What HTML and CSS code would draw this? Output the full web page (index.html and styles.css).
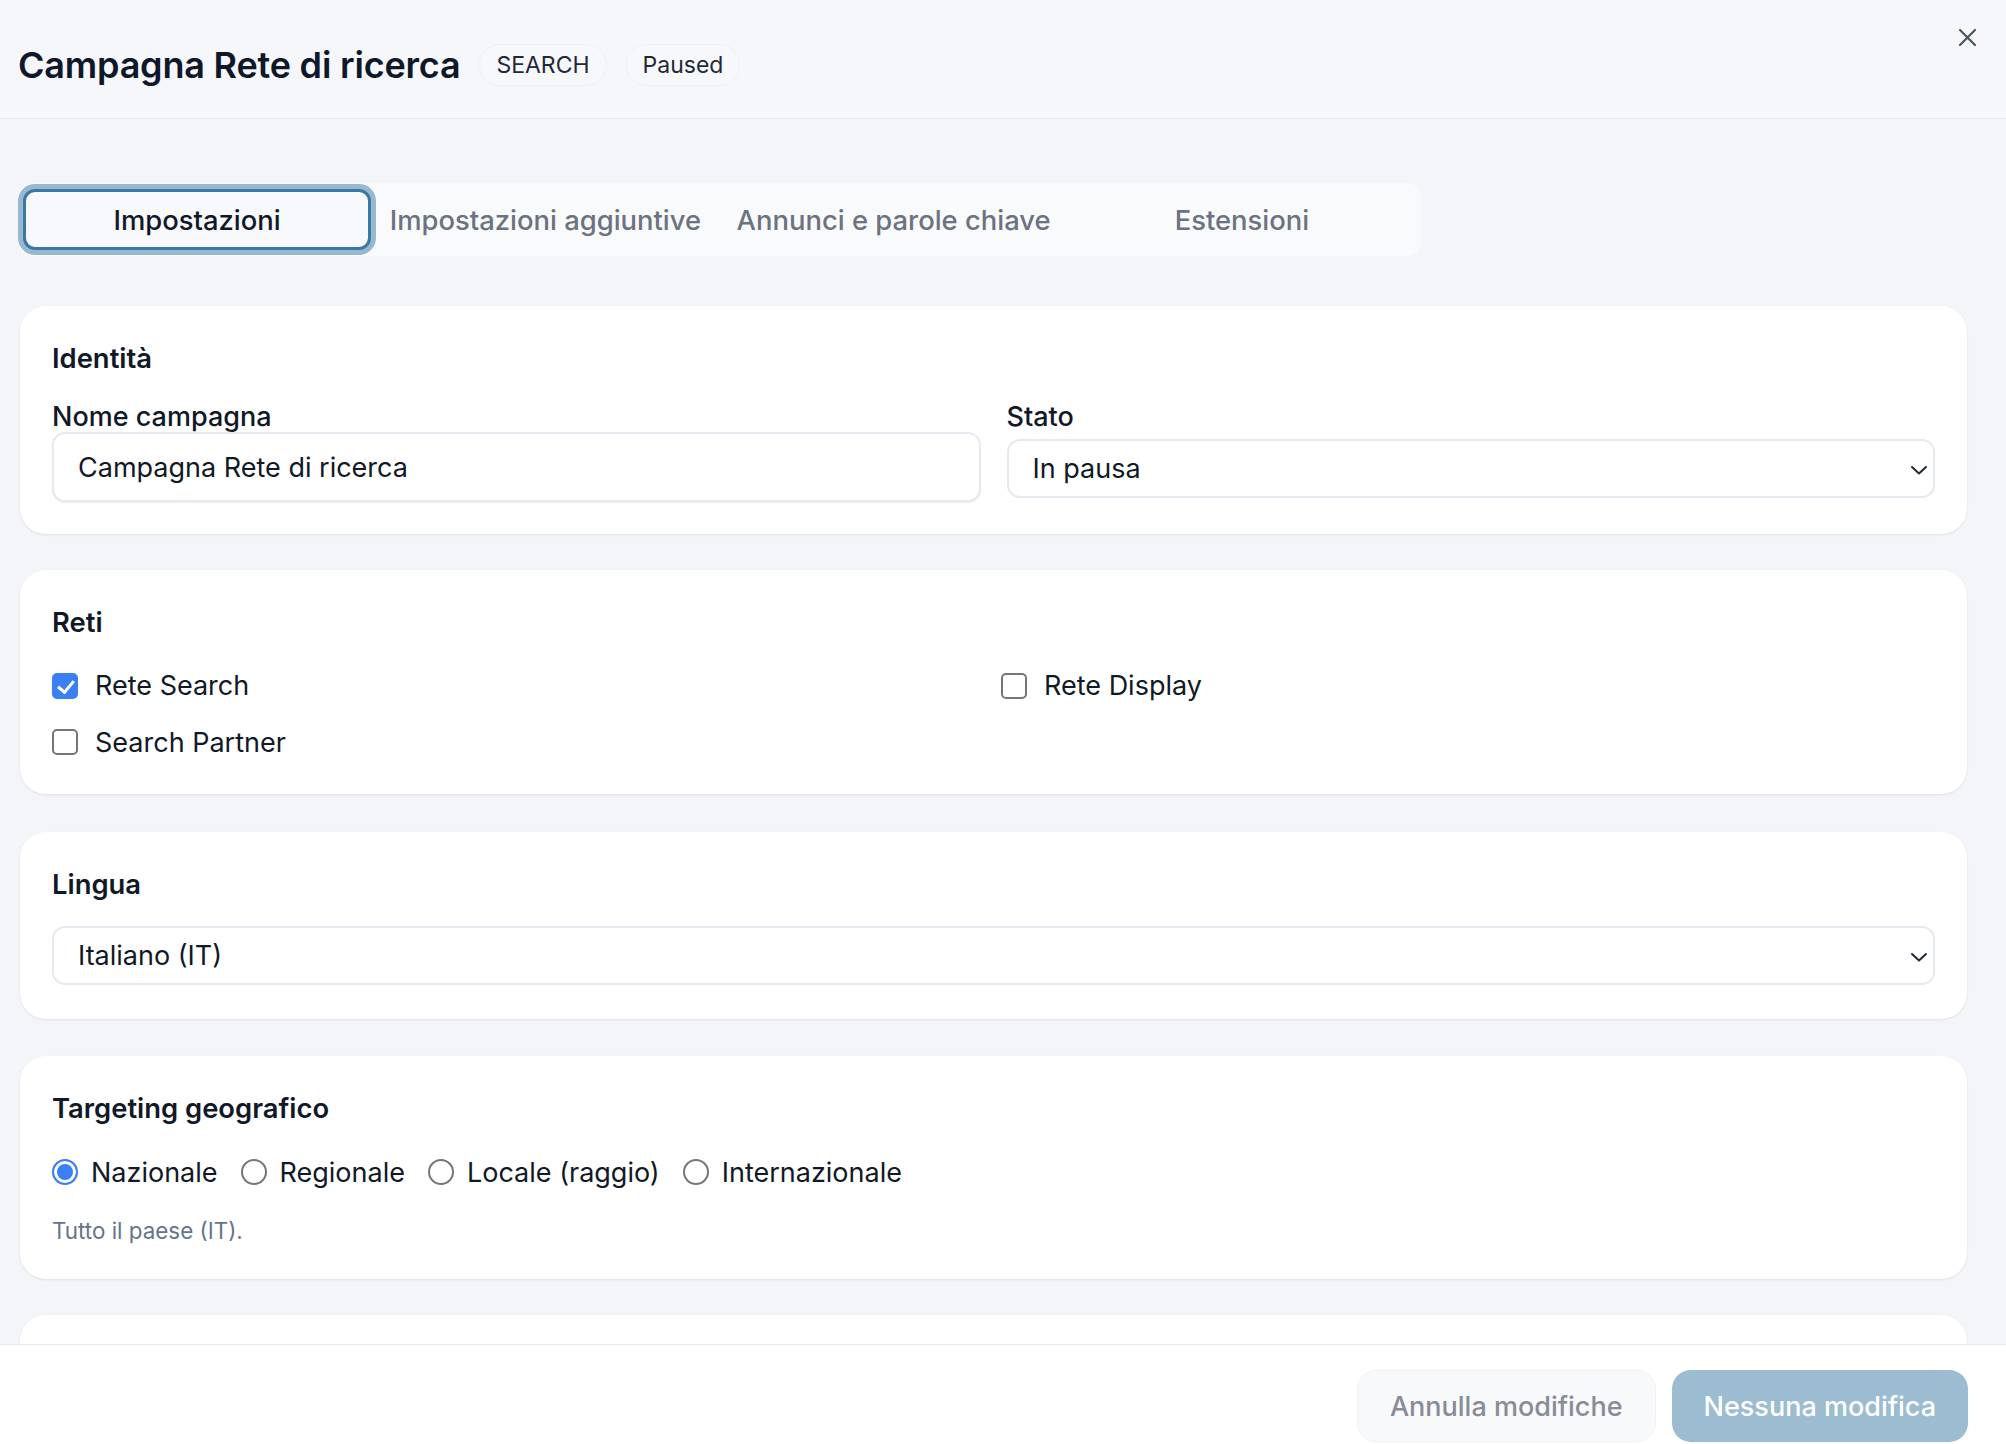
FILE: index.html
```html
<!DOCTYPE html>
<html lang="it">
<head>
<meta charset="utf-8">
<title>Campagna Rete di ricerca</title>
<link rel="stylesheet" href="styles.css">
</head>
<body>
<div class="app">
  <header class="header">
    <h1 class="title">Campagna Rete di ricerca</h1>
    <span class="pill">SEARCH</span>
    <span class="pill">Paused</span>
    <button class="close" aria-label="Chiudi">
      <svg width="19" height="19" viewBox="0 0 19 19" fill="none" stroke="#4b5563" stroke-width="2.2" stroke-linecap="round">
        <path d="M2 2 L17 17 M17 2 L2 17"/>
      </svg>
    </button>
  </header>

  <main class="main">
    <nav class="tabs">
      <button class="tab active">Impostazioni</button>
      <button class="tab">Impostazioni aggiuntive</button>
      <button class="tab">Annunci e parole chiave</button>
      <button class="tab">Estensioni</button>
    </nav>

    <section class="card">
      <h2 class="card-title">Identità</h2>
      <div class="two-col identity">
        <div class="field">
          <label class="label" for="nome">Nome campagna</label>
          <input id="nome" class="input" type="text" value="Campagna Rete di ricerca">
        </div>
        <div class="field">
          <label class="label" for="stato">Stato</label>
          <div class="select-wrap stato">
            <select id="stato" class="select">
              <option>In pausa</option>
              <option>Attiva</option>
            </select>
            <svg class="chevron" width="18" height="10" viewBox="0 0 18 10" fill="none" stroke="#1f2937" stroke-width="2" stroke-linecap="round" stroke-linejoin="round"><path d="M2 2 L9 8.5 L16 2"/></svg>
          </div>
        </div>
      </div>
    </section>

    <section class="card card-reti">
      <h2 class="card-title">Reti</h2>
      <div class="two-col checks">
        <label class="check"><input type="checkbox" class="box" checked><span>Rete Search</span></label>
        <label class="check"><input type="checkbox" class="box"><span>Rete Display</span></label>
        <label class="check"><input type="checkbox" class="box"><span>Search Partner</span></label>
      </div>
    </section>

    <section class="card card-lingua">
      <h2 class="card-title">Lingua</h2>
      <div class="select-wrap lingua">
        <select class="select">
          <option>Italiano (IT)</option>
          <option>Inglese (EN)</option>
        </select>
        <svg class="chevron" width="18" height="10" viewBox="0 0 18 10" fill="none" stroke="#1f2937" stroke-width="2" stroke-linecap="round" stroke-linejoin="round"><path d="M2 2 L9 8.5 L16 2"/></svg>
      </div>
    </section>

    <section class="card card-geo">
      <h2 class="card-title">Targeting geografico</h2>
      <div class="radios">
        <label class="radio"><input type="radio" name="geo" class="dot" checked><span>Nazionale</span></label>
        <label class="radio"><input type="radio" name="geo" class="dot"><span>Regionale</span></label>
        <label class="radio"><input type="radio" name="geo" class="dot"><span>Locale (raggio)</span></label>
        <label class="radio"><input type="radio" name="geo" class="dot"><span>Internazionale</span></label>
      </div>
      <p class="hint">Tutto il paese (IT).</p>
    </section>

    <section class="card card-next"></section>
  </main>

  <footer class="footer">
    <button class="btn btn-ghost">Annulla modifiche</button>
    <button class="btn btn-primary" disabled>Nessuna modifica</button>
  </footer>
</div>
</body>
</html>
```

FILE: styles.css
```css
* {
  box-sizing: border-box;
}

html,
body {
  margin: 0;
  height: 100%;
  overflow: hidden;
}

body {
  font-family: Inter, "Noto Sans", "Liberation Sans", sans-serif;
  color: #111827;
  background: #f4f5f8;
}

button,
input,
select {
  font-family: inherit;
}

.app {
  height: 100vh;
  display: flex;
  flex-direction: column;
}

/* Header */
.header {
  position: relative;
  height: 119px;
  flex: none;
  display: flex;
  align-items: flex-start;
  padding: 44px 18px 0;
  background: #f6f7fa;
  border-bottom: 1px solid #e7e8ec;
}

.title {
  margin: 0 19px 0 0;
  font-size: 36px;
  line-height: 42px;
  font-weight: 600;
  color: #0f172a;
  letter-spacing: -0.2px;
}

.pill {
  height: 42px;
  display: inline-flex;
  align-items: center;
  padding: 0 16px;
  margin-right: 19px;
  border: 1px solid #eff1f4;
  border-radius: 999px;
  background: #f7f8fb;
  font-size: 23px;
  color: #1f2937;
}

.close {
  position: absolute;
  top: 28px;
  right: 29px;
  width: 19px;
  height: 19px;
  padding: 0;
  border: 0;
  background: none;
  display: flex;
}

/* Scrollable body */
.main {
  flex: 1;
  min-height: 0;
  overflow: hidden;
  padding: 64px 39px 0 20px;
  background: #f4f5f8;
}

.tabs {
  display: grid;
  grid-template-columns: repeat(4, 1fr);
  width: 1403px;
  height: 73px;
  margin-left: -2px;
  padding: 6px 5px;
  border-radius: 14px;
  background: #f9fafc;
}

.tab {
  border: 3px solid transparent;
  border-radius: 12px;
  background: none;
  font-size: 27.4px;
  font-weight: 500;
  color: #6b7280;
  padding: 0;
}

.tab.active {
  border-color: #3a79a3;
  box-shadow: 0 0 0 5px #97b8ce;
  background: #f8f9fc;
  color: #111827;
}

/* Cards */
.card {
  margin-top: 36px;
  padding: 32px;
  background: #fff;
  border-radius: 26px;
  box-shadow: 0 1px 3px rgba(15, 23, 42, 0.06), 0 1px 2px rgba(15, 23, 42, 0.03);
}

.tabs + .card {
  margin-top: 50px;
}

.card-reti {
  padding-bottom: 33px;
}

.card-lingua {
  margin-top: 37.5px;
  padding-bottom: 33.5px;
}

.card-geo {
  margin-top: 37.5px;
}

.card-next {
  min-height: 140px;
}

.card-title {
  margin: 0;
  font-size: 27.4px;
  line-height: 40px;
  font-weight: 600;
  color: #111827;
}

.two-col {
  display: grid;
  grid-template-columns: 1fr 1fr;
  column-gap: 26px;
}

.identity {
  margin-top: 23px;
}

.field {
  display: flex;
  flex-direction: column;
}

.label {
  font-size: 27px;
  line-height: 31px;
  font-weight: 500;
  color: #111827;
}

.input {
  height: 70px;
  padding: 0 24px;
  border: 2px solid #e5e9f0;
  border-radius: 13px;
  font-size: 27px;
  color: #111827;
  background: #fff;
  box-shadow: 0 1px 2px rgba(15, 23, 42, 0.06);
  outline: none;
}

.select-wrap {
  position: relative;
}

.select-wrap.stato {
  margin-top: 7px;
}

.select-wrap.lingua {
  margin-top: 22.5px;
}

.select {
  width: 100%;
  height: 59px;
  padding: 0 24px;
  appearance: none;
  -webkit-appearance: none;
  border: 2px solid #e5e9f0;
  border-radius: 13px;
  background: #fff;
  font-size: 27px;
  color: #111827;
  outline: none;
}

.chevron {
  position: absolute;
  right: 7px;
  top: 50%;
  margin-top: -4px;
  pointer-events: none;
}

/* Checkboxes */
.checks {
  margin-top: 24.5px;
  row-gap: 18px;
  column-gap: 15px;
}

.check,
.radio {
  display: flex;
  align-items: center;
  height: 38.4px;
  font-size: 27px;
  color: #111827;
}

.check {
  gap: 17px;
}

.box {
  appearance: none;
  -webkit-appearance: none;
  margin: 0;
  width: 26px;
  height: 26px;
  border: 2px solid #767676;
  border-radius: 5px;
  background: #fff;
  flex: none;
}

.box:checked {
  border-color: #3b7ff5;
  background: #3b7ff5;
  position: relative;
}

.box:checked::after {
  content: "";
  position: absolute;
  left: 7px;
  top: 2px;
  width: 7px;
  height: 13px;
  border: solid #fff;
  border-width: 0 3.5px 3.5px 0;
  transform: rotate(40deg);
}

/* Radios */
.radios {
  display: flex;
  gap: 23px;
  margin-top: 25px;
}

.radio {
  gap: 13px;
}

.dot {
  appearance: none;
  -webkit-appearance: none;
  margin: 0;
  width: 26px;
  height: 26px;
  border: 2px solid #767676;
  border-radius: 50%;
  background: #fff;
  flex: none;
}

.dot:checked {
  border-color: #3b7ff5;
  background: #3b7ff5;
  box-shadow: inset 0 0 0 3px #fff;
}

.hint {
  margin: 22px 0 0;
  font-size: 22.4px;
  line-height: 33.6px;
  color: #64748b;
}

/* Footer */
.footer {
  flex: none;
  height: 100px;
  display: flex;
  justify-content: flex-end;
  gap: 16px;
  padding: 25px 38px 0;
  background: #fff;
  border-top: 1px solid #e8e9ec;
}

.btn {
  height: 72px;
  padding: 0 32px;
  border-radius: 19px;
  font-size: 27px;
  font-weight: 500;
}

.btn-ghost {
  border: 1px solid #f1f2f5;
  background: #f8f9fb;
  color: #878c96;
}

.btn-primary {
  border: 0;
  background: #9bbcd1;
  color: #fff;
}
```
